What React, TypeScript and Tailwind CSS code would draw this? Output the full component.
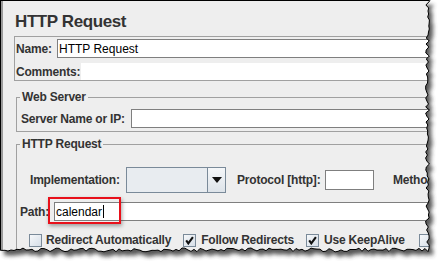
const rnd = (i: number) => {
  const x = Math.sin(i * 127.1 + 311.7) * 43758.5453;
  return x - Math.floor(x);
};

// torn right and bottom edge of the screenshot
const right: string[] = [];
for (let i = 0, y = 2; y < 250; y += 3, i++) right.push(`L${(427.5 + (rnd(i) - 0.5) * 4).toFixed(1)} ${y}`);
const bottom: string[] = [];
for (let i = 0, x = 428; x > 0; x -= 3, i++) bottom.push(`L${x} ${(250 + (rnd(i + 100) - 0.5) * 4).toFixed(1)}`);
const edge = `M430 0.5 ${right.join(" ")} ${bottom.join(" ")} L0 250`;
const poly = `M0 0 L430 0 ${right.join(" ")} ${bottom.join(" ")} L0 250 Z`;

const label = "text-[12px] font-bold leading-[14px] tracking-[-0.2px] text-[#333333] whitespace-nowrap";

const Check = ({ checked }: { checked?: boolean }) => (
  <span className="flex h-[13px] w-[13px] shrink-0 items-center justify-center border border-[#7a8a99] bg-gradient-to-br from-[#f6f8fa] to-[#d6dee7]">
    {checked && (
      <svg width="9" height="9" viewBox="0 0 9 9">
        <path d="M1.2 4.4L3.3 7.4L7.9 1.2" stroke="#111" strokeWidth="2.1" fill="none" />
      </svg>
    )}
  </span>
);

const Combo = () => (
  <div className="flex h-[26px] w-[100px] shrink-0 border border-[#7a8a99] bg-[#e8ecf0]">
    <div className="flex-1 border-r border-[#7a8a99]" />
    <div className="flex w-[17px] items-center justify-center bg-gradient-to-b from-[#f5f7f9] to-[#dde3e9]">
      <svg width="10" height="6" viewBox="0 0 10 6">
        <path d="M0 0H10L5 6Z" fill="#111" />
      </svg>
    </div>
  </div>
);

export default function App() {
  return (
    <div className="relative h-[269px] w-[448px] overflow-hidden bg-white font-['Liberation_Sans',Arial,sans-serif]">
      <div className="h-[262px] w-[440px] border-l border-t border-black bg-[#eeeeee]">
        <div className="h-full border-l-2 border-[#9a9a9a] pl-[11px] pt-[11px]">
          <div className="ml-[1px] text-[17px] font-bold leading-[20px] tracking-[-0.4px] text-[#333333]">HTTP Request</div>

          <div className="mt-[4px] w-[430px] border border-[#a0a0a0] pl-[1px] pt-[2px]">
            <div className="flex h-[19px] items-center">
              <span className={`${label} w-[41px]`}>Name:</span>
              <div className="flex h-[19px] flex-1 items-center border border-[#7f7f7f] bg-white pl-[1px] text-[12px] text-black">
                HTTP Request
              </div>
            </div>
            <div className="mt-[5px] flex h-[17px] items-center">
              <span className={`${label} w-[65px]`}>Comments:</span>
              <div className="h-[17px] flex-1 bg-white" />
            </div>
          </div>

          <fieldset className="ml-[2px] mt-[9px] w-[430px] border border-[#a0a0a0] pb-[3px]">
            <legend className={`${label} ml-[3px] px-[2px]`}>Web Server</legend>
            <div className="flex items-center pl-[4px] pt-[5px]">
              <span className={`${label} w-[110px]`}>Server Name or IP:</span>
              <div className="h-[19px] flex-1 border border-[#7f7f7f] bg-white" />
            </div>
          </fieldset>

          <fieldset className="ml-[2px] mt-[5px] w-[430px] border border-[#a0a0a0] pb-[20px]">
            <legend className={`${label} ml-[3px] px-[2px]`}>HTTP Request</legend>
            <div className="flex items-center pl-[13px] pt-[16px]">
              <span className={`${label} w-[96px]`}>Implementation:</span>
              <Combo />
              <span className={`${label} ml-[11px] w-[88px]`}>Protocol [http]:</span>
              <div className="h-[20px] w-[49px] shrink-0 border border-[#7f7f7f] bg-white" />
              <span className={`${label} ml-[19px]`}>Method:</span>
            </div>

            <div className="relative mt-[9px] flex items-center pl-[3px]">
              <span className={`${label} w-[34px]`}>Path:</span>
              <div className="flex h-[19px] flex-1 items-center border border-[#7f7f7f] bg-white pl-[1px] text-[12px] text-black">
                calendar
                <span className="ml-[1px] h-[13px] w-[1px] bg-black" />
              </div>
              <div className="absolute left-[31px] top-[-5px] h-[27px] w-[73px] border-2 border-[#e8101a] shadow-[1px_2px_4px_rgba(0,0,0,0.35)]" />
            </div>

            <div className="mt-[12px] flex items-center pl-[12px]">
              <Check />
              <span className={`${label} ml-[4px]`}>Redirect Automatically</span>
              <span className="ml-[12px]">
                <Check checked />
              </span>
              <span className={`${label} ml-[5px]`}>Follow Redirects</span>
              <span className="ml-[12px]">
                <Check checked />
              </span>
              <span className={`${label} ml-[5px]`}>Use KeepAlive</span>
              <span className="ml-[14px]">
                <Check />
              </span>
            </div>
          </fieldset>
        </div>
      </div>

      <svg className="pointer-events-none absolute inset-0" width="448" height="269" viewBox="0 0 448 269">
        <defs>
          <clipPath id="out">
            <path d={`M0 0H448V269H0Z ${poly}`} clipRule="evenodd" />
          </clipPath>
          <filter id="blur" x="-10%" y="-10%" width="120%" height="120%">
            <feGaussianBlur stdDeviation="2" />
          </filter>
        </defs>
        <path d={`M0 0H448V269H0Z ${poly}`} fill="#ffffff" fillRule="evenodd" />
        <g clipPath="url(#out)">
          <path d={poly} transform="translate(4 5)" fill="#3a3a3a" opacity="0.85" filter="url(#blur)" />
        </g>
        <path d={edge} stroke="#000" strokeWidth="1" fill="none" />
      </svg>
    </div>
  );
}
